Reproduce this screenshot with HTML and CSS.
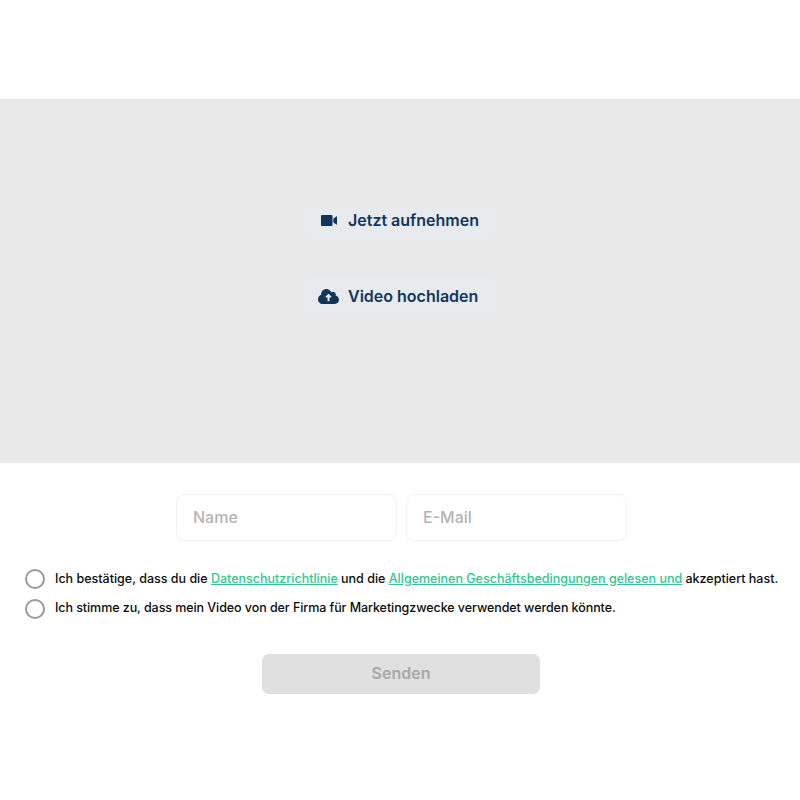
FILE: index.html
```html
<!DOCTYPE html>
<html lang="de">
<head>
<meta charset="utf-8">
<title>Video</title>
<link rel="stylesheet" href="styles.css">
</head>
<body>
<section class="stage">
  <button class="action" type="button">
    <span class="icon-box"><svg width="16" height="11" viewBox="0 0 16 11"><path fill="#12355b" d="M1 0h9.500a1 1 0 0 1 1 1v9a1 1 0 0 1-1 1H1a1 1 0 0 1-1-1V1a1 1 0 0 1 1-1zM12.300 3.800 15.200 1.400c.3-.2.8 0 .8.400v7.400c0 .4-.5.600-.8.400L12.300 7.200z"/></svg></span>
    <span>Jetzt aufnehmen</span>
  </button>
  <button class="action" type="button">
    <span class="icon-box"><svg width="21" height="15" viewBox="0 0 21 15"><path fill="#12355b" d="M17.600 6.500C17.700 6.200 17.800 5.900 17.800 5.600 17.800 4 16.500 2.700 14.900 2.700 14.300 2.700 13.800 2.900 13.300 3.200 12.500 1.300 10.600 0 8.400 0 5.500 0 3.100 2.400 3.100 5.300 3.100 5.500 3.100 5.600 3.100 5.800 1.300 6.500 0 8.200 0 10.200 0 12.800 2.100 15 4.700 15H16.800C19.100 15 21 13.100 21 10.800 21 8.800 19.500 7 17.600 6.500ZM13 8.500H11.500V11.700C11.500 12 11.300 12.200 11 12.200H10C9.700 12.200 9.500 12 9.500 11.700V8.500H8C7.500 8.500 7.300 7.900 7.600 7.600L10.200 5C10.400 4.800 10.600 4.800 10.800 5L13.400 7.600C13.700 7.900 13.500 8.500 13 8.500Z"/></svg></span>
    <span>Video hochladen</span>
  </button>
</section>
<form class="form">
  <div class="fields">
    <div class="field">Name</div>
    <div class="field">E-Mail</div>
  </div>
  <div class="consents">
    <div class="consent"><span class="check"></span><span>Ich bestätige, dass du die <a href="#">Datenschutzrichtlinie</a> und die <a href="#">Allgemeinen Geschäftsbedingungen gelesen und</a> akzeptiert hast.</span></div>
    <div class="consent consent-tight"><span class="check"></span><span>Ich stimme zu, dass mein Video von der Firma für Marketingzwecke verwendet werden könnte.</span></div>
  </div>
  <div class="submit-row"><div class="submit">Senden</div></div>
</form>
</body>
</html>
```
FILE: styles.css
```css
* { box-sizing: border-box; }
html, body { margin: 0; padding: 0; }
body {
  width: 800px;
  height: 800px;
  background: #fff;
  font-family: "Inter", "Liberation Sans", sans-serif;
  overflow: hidden;
}
.stage {
  margin-top: 99px;
  height: 364px;
  background: #e9e9ea;
  display: flex;
  flex-direction: column;
  align-items: center;
  padding-top: 103px;
  gap: 38px;
}
.action {
  width: 190px;
  height: 38px;
  padding: 0 0 2px 13px;
  border: 0;
  border-radius: 6px;
  background: #e8ebee;
  color: #12355b;
  font: 600 16px "Inter", sans-serif;
  display: flex;
  align-items: center;
}
.icon-box {
  width: 21px;
  margin-right: 9px;
  display: flex;
  justify-content: center;
}
.fields {
  display: flex;
  gap: 9px;
  margin: 31px 0 0 176px;
}
.field {
  width: 221px;
  height: 47px;
  padding: 0 0 2px 16px;
  border: 1px solid #f2f2f2;
  border-radius: 8px;
  background: #fff;
  color: #b4b4b4;
  font-size: 16px;
  font-weight: 500;
  display: flex;
  align-items: center;
}
.consents {
  margin: 28px 0 0 25px;
  display: flex;
  flex-direction: column;
  gap: 10px;
}
.consent {
  display: flex;
  align-items: center;
  gap: 10px;
  height: 20px;
  font-size: 12.5px;
  font-weight: 500;
  color: #0c0c0c;
  white-space: nowrap;
}
.consent > span:last-child { margin-bottom: 2px; }
.consent-tight > span:last-child { margin-bottom: 4px; letter-spacing: -0.07px; }
.check {
  width: 20px;
  height: 20px;
  flex: none;
  border: 2px solid #999;
  border-radius: 50%;
  background: #fff;
}
.consent a { color: #2ec98f; text-decoration: underline; }
.submit-row { margin: 35px 0 0 262px; }
.submit {
  width: 278px;
  height: 40px;
  padding-bottom: 2px;
  border-radius: 7px;
  background: #e0e0e0;
  color: #a8a8a8;
  font-size: 16px;
  font-weight: 600;
  display: flex;
  align-items: center;
  justify-content: center;
}
```
